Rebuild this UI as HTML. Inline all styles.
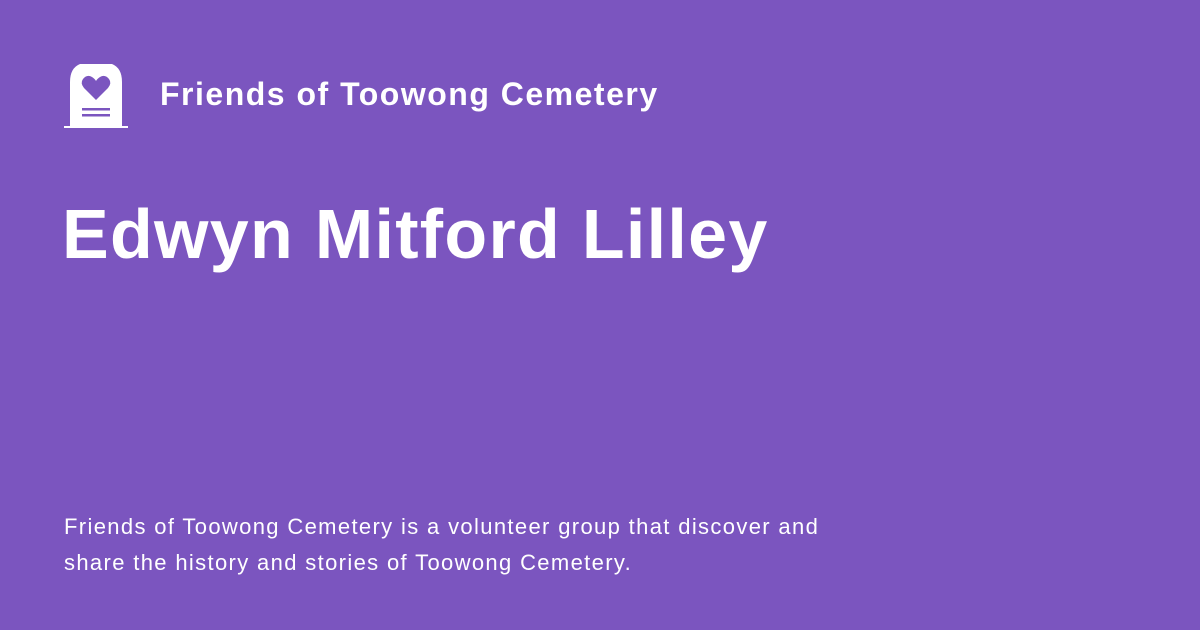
<!DOCTYPE html>
<html><head><meta charset="utf-8"><style>
html,body{margin:0;padding:0}
body{width:1200px;height:630px;background:#7b55bf;position:relative;overflow:hidden;font-family:"Liberation Sans",sans-serif;color:#fff}
.logo{position:absolute;left:64px;top:64px}
.site{position:absolute;left:160px;top:76px;font-size:32px;font-weight:bold;letter-spacing:1.5px}
h1{position:absolute;left:62px;top:194px;margin:0;font-size:70px;font-weight:bold;letter-spacing:1.3px}
.desc{position:absolute;left:64px;top:509px;font-size:22px;line-height:36px;width:790px;letter-spacing:1.35px}
</style></head><body>
<svg class="logo" width="64" height="64" viewBox="0 0 64 64">
<path d="M6 62 V18 Q6 4 16 0 H48 Q58 4 58 18 V62 Z" fill="#fff"/>
<rect x="0" y="62" width="64" height="2" fill="#fff"/>
<path d="M32 36 L20 24 Q16 19 19 15 Q23 10 28 13 Q31 15 32 17 Q33 15 36 13 Q41 10 45 15 Q48 19 44 24 Z" fill="#7b55bf"/>
<rect x="18" y="44" width="28" height="2.5" fill="#7b55bf"/>
<rect x="18" y="50" width="28" height="2.5" fill="#7b55bf"/>
</svg>
<div class="site">Friends of Toowong Cemetery</div>
<h1>Edwyn Mitford Lilley</h1>
<div class="desc">Friends of Toowong Cemetery is a volunteer group that discover and share the history and stories of Toowong Cemetery.</div>
</body></html>
